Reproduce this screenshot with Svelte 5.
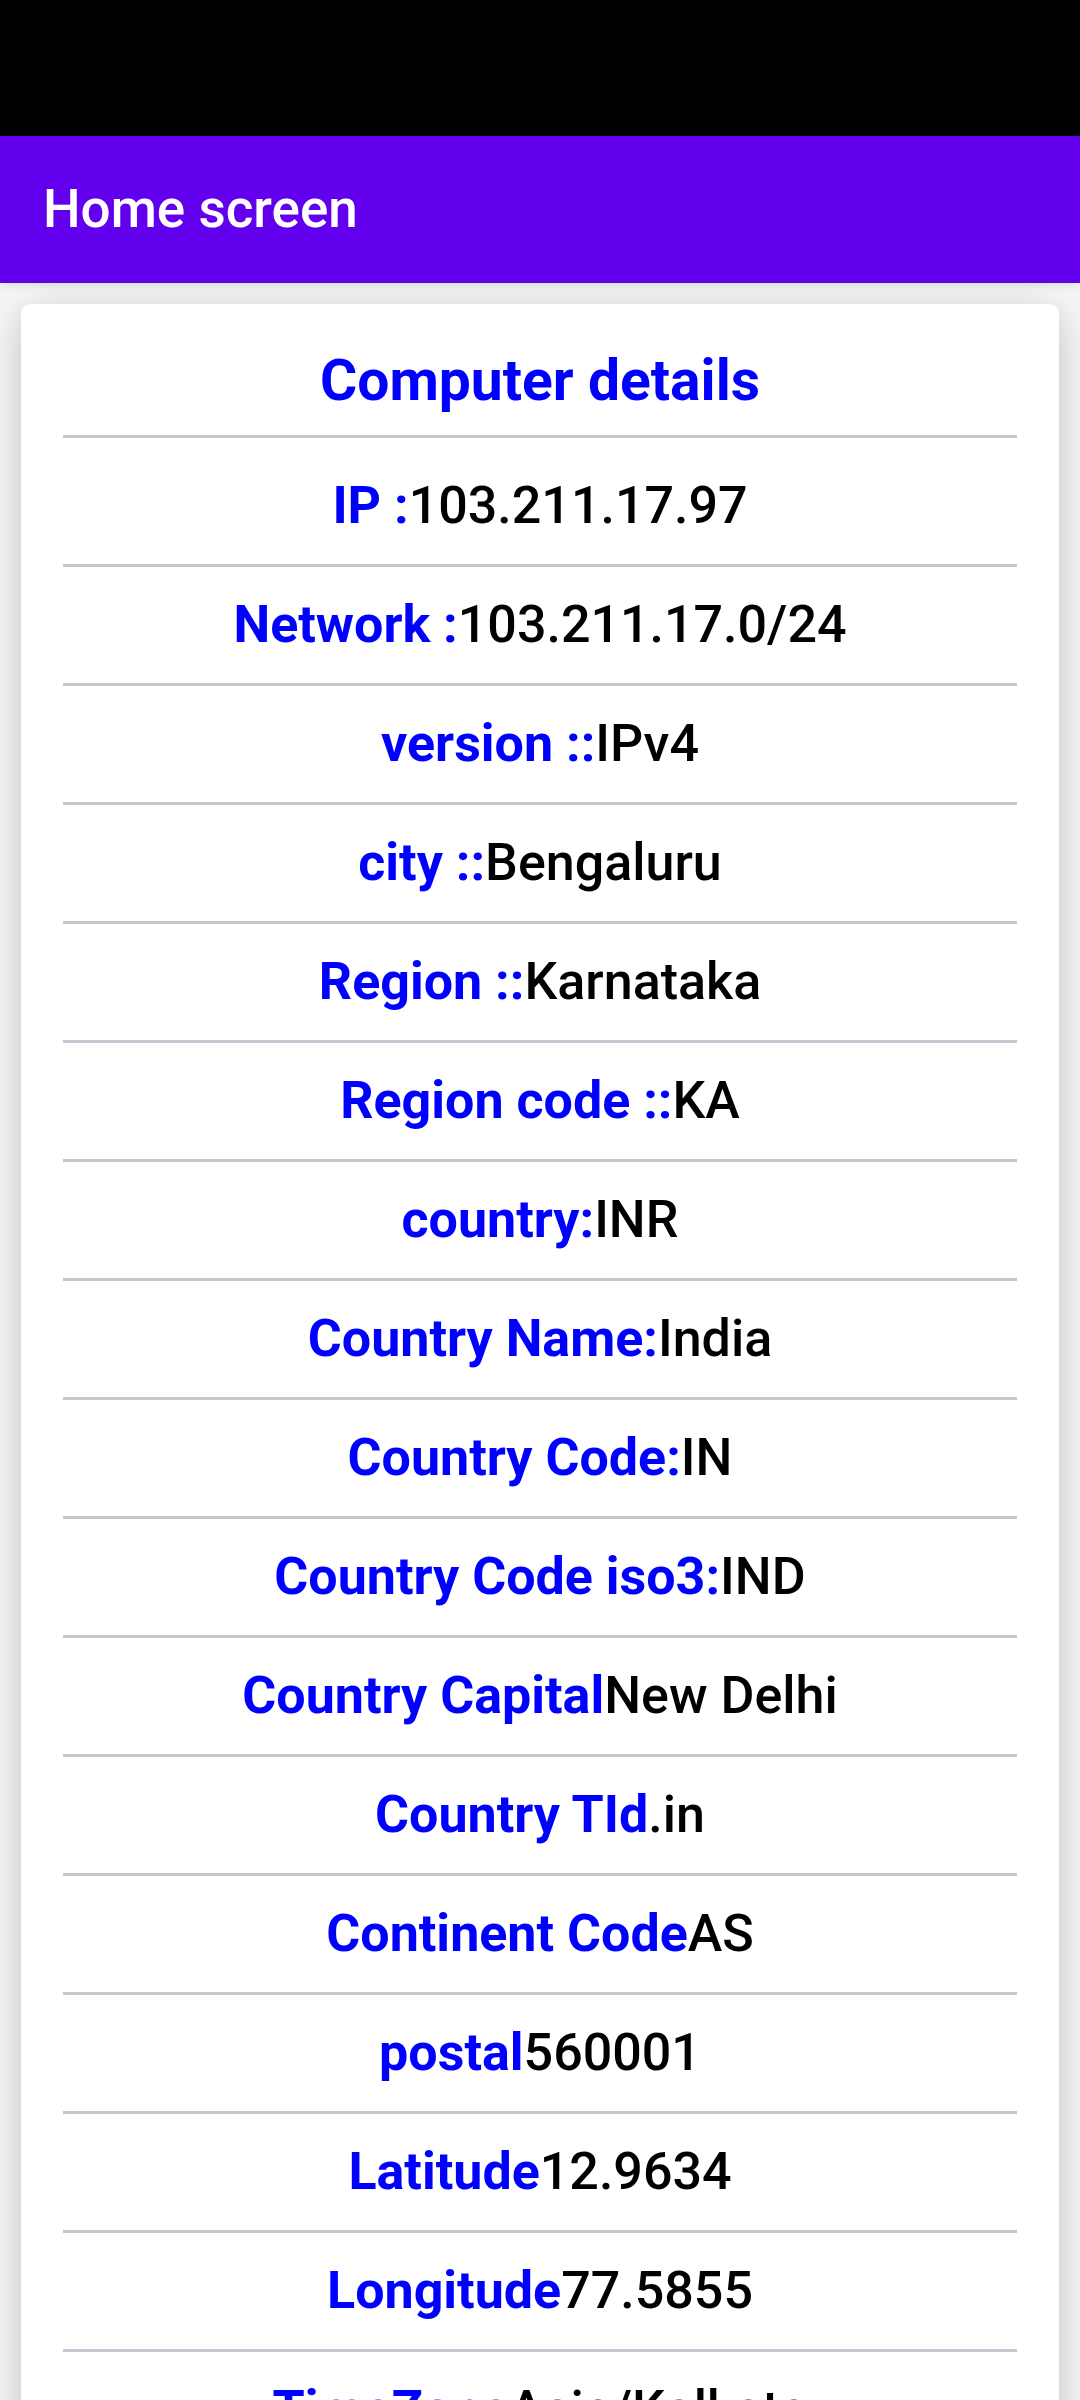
<script>
  const details = [
    ['IP :', '103.211.17.97'],
    ['Network :', '103.211.17.0/24'],
    ['version ::', 'IPv4'],
    ['city ::', 'Bengaluru'],
    ['Region ::', 'Karnataka'],
    ['Region code ::', 'KA'],
    ['country:', 'INR'],
    ['Country Name:', 'India'],
    ['Country Code:', 'IN'],
    ['Country Code iso3:', 'IND'],
    ['Country Capital', 'New Delhi'],
    ['Country TId', '.in'],
    ['Continent Code', 'AS'],
    ['postal', '560001'],
    ['Latitude', '12.9634'],
    ['Longitude', '77.5855'],
    ['TimeZone', 'Asia/Kolkata'],
  ];
</script>

<div class="screen">
  <div class="status"></div>
  <header><h1>Home screen</h1></header>
  <main>
    <section class="card">
      <h2>Computer details</h2>
      <dl>
        {#each details as [label, value]}
          <div class="row"><dt>{label}</dt><dd>{value}</dd></div>
        {/each}
      </dl>
    </section>
  </main>
</div>

<style>
  :global(body) { margin: 0; }
  .screen {
    height: 100vh;
    overflow: hidden;
    display: flex;
    flex-direction: column;
    background: #f5f5f7;
    font-family: Roboto, sans-serif;
    color: #000;
  }
  .status { flex: none; height: 136px; background: #000; }
  header {
    flex: none;
    padding: 42px 43px 43px;
    background: #6200ee;
    box-shadow: 0 2px 8px rgba(0, 0, 0, 0.1);
  }
  h1 { margin: 0; font-size: 53px; line-height: 62px; font-weight: 500; color: #fff; }
  main { flex: 1; min-height: 0; padding: 21px; }
  .card {
    padding: 43px 42px;
    background: #fff;
    border-radius: 10px;
    box-shadow: 0 0 40px rgba(0, 0, 0, 0.1), 0 20px 32px rgba(0, 0, 0, 0.12);
    clip-path: inset(-21px -21px -60px);
  }
  h2 {
    margin: 0;
    padding-bottom: 20px;
    border-bottom: 3px solid #cac4d0;
    font-size: 57px;
    line-height: 68px;
    font-weight: 700;
    text-align: center;
    color: #00f;
  }
  dl { margin: 0; padding-top: 10px; }
  .row {
    display: flex;
    justify-content: center;
    padding: 27px 0;
    border-bottom: 3px solid #cac4d0;
    font-size: 52px;
    line-height: 62px;
    white-space: nowrap;
  }
  dt { font-weight: 700; color: #00f; }
  dd { margin: 0; font-weight: 500; }
</style>
